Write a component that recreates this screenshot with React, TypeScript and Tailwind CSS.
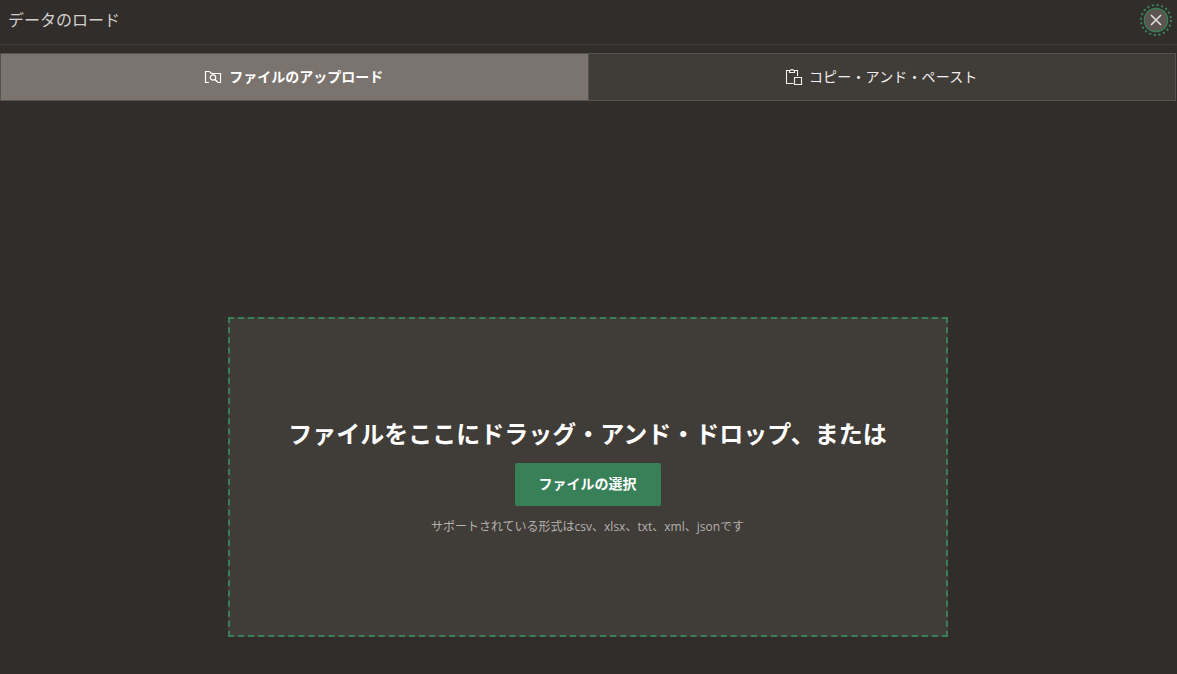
import { useState } from "react";

const TABS = [
  { id: "upload", label: "ファイルのアップロード" },
  { id: "paste", label: "コピー・アンド・ペースト" },
];

function FolderSearchIcon() {
  return (
    <svg width="18" height="16" viewBox="0 0 18 16" fill="none" stroke="currentColor" strokeWidth="1.2">
      <path d="M5 13.5H1.5V2.5H5.5L7.5 4.5H16.5V13.5H14" />
      <circle cx="9" cy="8.5" r="2.7" />
      <path d="M11 10.5L14 13.5" strokeWidth="1.4" />
    </svg>
  );
}

function PasteIcon() {
  return (
    <svg width="18" height="18" viewBox="0 0 18 18" fill="none" stroke="currentColor" strokeWidth="1.1">
      <path d="M8.5 15.5H1.5V2.5H4.5M9.5 2.5H12.5V8" />
      <path d="M4.5 4.5V2.5H5.5L6.5 1.5H7.5L8.5 2.5H9.5V4.5Z" />
      <path d="M9.5 9.5H16.5V16.5H9.5Z" />
    </svg>
  );
}

export default function App() {
  const [tab, setTab] = useState("upload");

  return (
    <main className="h-screen overflow-hidden bg-[#312d2a] text-[#f1efed] font-['Open_Sans','Noto_Sans_CJK_JP',sans-serif]">

      {/* HEADER */}
      <header className="flex h-[45px] items-start justify-between border-b border-[#443f3b] pl-2 pr-[5px]">
        <h1 className="h-10 text-base leading-10 text-[#d3d0cd]">データのロード</h1>
        <button aria-label="閉じる" className="mt-1 h-8 w-8">
          <svg width="32" height="32" viewBox="0 0 32 32" fill="none">
            <circle cx="16" cy="16" r="15" stroke="#388058" strokeWidth="2" strokeDasharray="2.2 2.512" />
            <circle cx="16" cy="16" r="11.7" fill="#5b5450" stroke="#388058" strokeWidth="1.2" />
            <path d="M11 11L21 21M21 11L11 21" stroke="#e2dfdc" strokeWidth="1.6" />
          </svg>
        </button>
      </header>

      {/* TABS */}
      <div className="mt-2 mr-px flex h-12 border border-[#55514c]">
        {TABS.map((t) => (
          <button
            key={t.id}
            onClick={() => setTab(t.id)}
            className={`flex flex-1 items-center justify-center text-sm first:border-r first:border-[#55514c] ${
              tab === t.id ? "gap-[7px] bg-[#7b736d] pr-px font-bold text-white" : "gap-1.5 bg-[#403c38] pr-px tracking-[0.15px]"
            }`}
          >
            {t.id === "upload" ? <FolderSearchIcon /> : <PasteIcon />}
            <span>{t.label}</span>
          </button>
        ))}
      </div>

      {/* DROP ZONE */}
      <section className="mt-[216px] mr-[229px] ml-[228px] flex h-80 flex-col items-center border-2 border-dashed border-[#388058] bg-[#403c38] pt-[97px]">
        <h2 className="h-9 whitespace-nowrap pr-px text-2xl leading-9 font-bold text-white">
          ファイルをここにドラッグ・アンド・ドロップ、または
        </h2>
        <button className="mt-[11px] h-[43px] w-[146px] rounded-xs bg-[#388058] pr-px pb-0.5 text-sm font-bold text-white">
          ファイルの選択
        </button>
        <p className="mt-[11px] pr-px text-xs leading-5 text-[#b5b1ad]">
          サポートされている形式は<span className="font-medium">csv</span>、<span className="font-medium">xlsx</span>、<span className="font-medium">txt</span>、<span className="font-medium">xml</span>、<span className="font-medium">json</span>です
        </p>
      </section>

    </main>
  );
}
